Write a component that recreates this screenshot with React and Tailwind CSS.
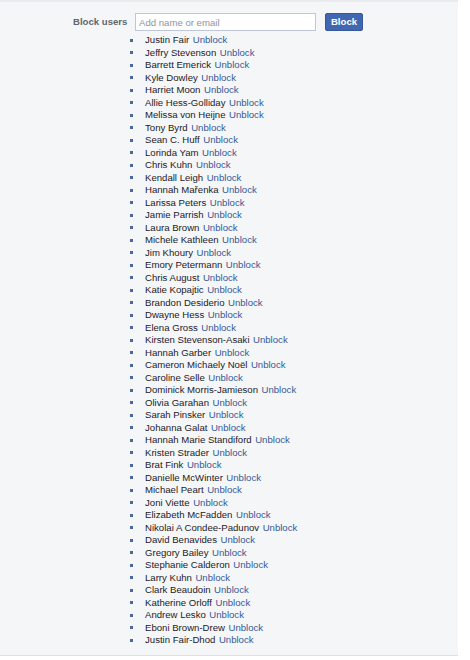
import React from 'react';

const blocked = [
  'Justin Fair', 'Jeffry Stevenson', 'Barrett Emerick', 'Kyle Dowley', 'Harriet Moon',
  'Allie Hess-Golliday', 'Melissa von Heijne', 'Tony Byrd', 'Sean C. Huff', 'Lorinda Yam',
  'Chris Kuhn', 'Kendall Leigh', 'Hannah Mařenka', 'Larissa Peters', 'Jamie Parrish',
  'Laura Brown', 'Michele Kathleen', 'Jim Khoury', 'Emory Petermann', 'Chris August',
  'Katie Kopajtic', 'Brandon Desiderio', 'Dwayne Hess', 'Elena Gross', 'Kirsten Stevenson-Asaki',
  'Hannah Garber', 'Cameron Michaely Noël', 'Caroline Selle', 'Dominick Morris-Jamieson', 'Olivia Garahan',
  'Sarah Pinsker', 'Johanna Galat', 'Hannah Marie Standiford', 'Kristen Strader', 'Brat Fink',
  'Danielle McWinter', 'Michael Peart', 'Joni Viette', 'Elizabeth McFadden', 'Nikolai A Condee-Padunov',
  'David Benavides', 'Gregory Bailey', 'Stephanie Calderon', 'Larry Kuhn', 'Clark Beaudoin',
  'Katherine Orloff', 'Andrew Lesko', 'Eboni Brown-Drew', 'Justin Fair-Dhod',
];

export default function App() {
  return (
    <div className="w-[470px] h-[660px] bg-white font-['Liberation_Sans',Arial,sans-serif] text-[9.6px] text-[#1d2129]">
      <div className="w-[458px] bg-[#f5f6f7] border-t-2 border-b border-t-[#e9ebee] border-b-[#dddfe2] pt-[11px] pb-[8px]">
        {/* Block form */}
        <div className="flex items-center h-[18px]">
          <span className="ml-[73px] w-[54px] font-bold text-[#606770] whitespace-nowrap">Block users</span>
          <input
            type="text"
            placeholder="Add name or email"
            className="ml-[8px] w-[181px] h-[18px] border border-[#bdc7d8] bg-white px-[3px] text-[9.6px] placeholder:text-[#90949c] outline-none"
          />
          <button className="ml-[9px] w-[38px] h-[18px] bg-[#4267b2] border border-[#365899] rounded-[2px] text-white font-bold text-[9.6px] leading-none">
            Block
          </button>
        </div>

        {/* Blocked list */}
        <ul className="mt-[3px] ml-[130px]">
          {blocked.map((name) => (
            <li key={name} className="flex items-center h-[12.5px] leading-[12.5px] whitespace-nowrap">
              <span className="w-[3px] h-[3px] bg-[#4b67a1] mr-[12px] shrink-0" />
              <span>{name}</span>
              <a href="#" className="ml-[3.5px] text-[#365899]">Unblock</a>
            </li>
          ))}
        </ul>
      </div>
    </div>
  );
}
